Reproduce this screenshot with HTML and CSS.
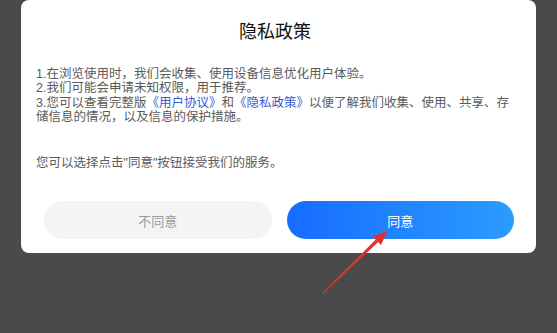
FILE: index.html
```html
<!DOCTYPE html>
<html lang="zh-CN">
<head>
  <meta charset="UTF-8" />
  <meta name="viewport" content="width=device-width, initial-scale=1.0"/>
  <title>隐私政策</title>
  <link rel="stylesheet" href="styles.css">
</head>
<body>
  <div class="dialog">
    <h2 class="title">隐私政策</h2>
    <div class="content">
      <div>1.在浏览使用时，我们会收集、使用设备信息优化用户体验。</div>
      <div>2.我们可能会申请未知权限，用于推荐。</div>
      <div>3.您可以查看完整版<a href="#">《用户协议》</a>和<a href="#">《隐私政策》</a><span>以便了解我们收集、使用、共享、存</span></div>
      <div>储信息的情况，以及信息的保护措施。</div>
    </div>
    <p class="content tip">您可以选择点击"同意"按钮接受我们的服务。</p>
    <div class="actions">
      <button class="btn btn-cancel">不同意</button>
      <button class="btn btn-ok">同意</button>
    </div>
  </div>

  <!-- 红色指示箭头 -->
  <svg class="arrow" viewBox="0 0 557 333" width="557" height="333">
    <polygon fill="#e8302a" points="322.6,292.8 323.4,293.4 378.2,242 375.8,239.4"/>
    <polygon fill="#e8302a" points="387.5,231 381,245 372.5,236.5"/>
  </svg>
</body>
</html>
```

FILE: styles.css
```css
body {
  margin: 0;
  width: 557px;
  height: 333px;
  background: #4a4a4a;
  font-family: "Noto Sans CJK SC", "Noto Sans", sans-serif;
  overflow: hidden;
  position: relative;
}

.dialog {
  margin: 0 21px;
  background: #fff;
  border-radius: 8px;
  padding: 0 22px 14px 15px;
}

.title {
  margin: 0;
  padding-top: 18px;
  font-size: 18px;
  line-height: 24px;
  font-weight: normal;
  text-align: center;
  color: #111;
}

/* 拉丁字体在前，行框按其度量计算，中文回退到 Noto CJK */
.content {
  margin: 24.5px 0 0;
  font-family: "Liberation Sans", "Noto Sans CJK SC", sans-serif;
  font-size: 12.5px;
  line-height: 14.5px;
  color: #5a5a5a;
  white-space: nowrap;
}

.content a {
  color: #3a5bd0;
  text-decoration: none;
}

.tip {
  margin-top: 31.75px;
}

.actions {
  display: flex;
  gap: 15px;
  margin-top: 30.25px;
  padding-left: 8px;
}

.btn {
  flex: 1;
  height: 38px;
  border: none;
  border-radius: 19px;
  font-family: inherit;
  font-size: 13px;
  padding: 0;
}

.btn-cancel {
  background: #f4f4f4;
  color: #999;
}

.btn-ok {
  background: linear-gradient(90deg, #176cff, #2b9cff);
  color: #fff;
}

.arrow {
  position: absolute;
  left: 0;
  top: 0;
  pointer-events: none;
}
```
